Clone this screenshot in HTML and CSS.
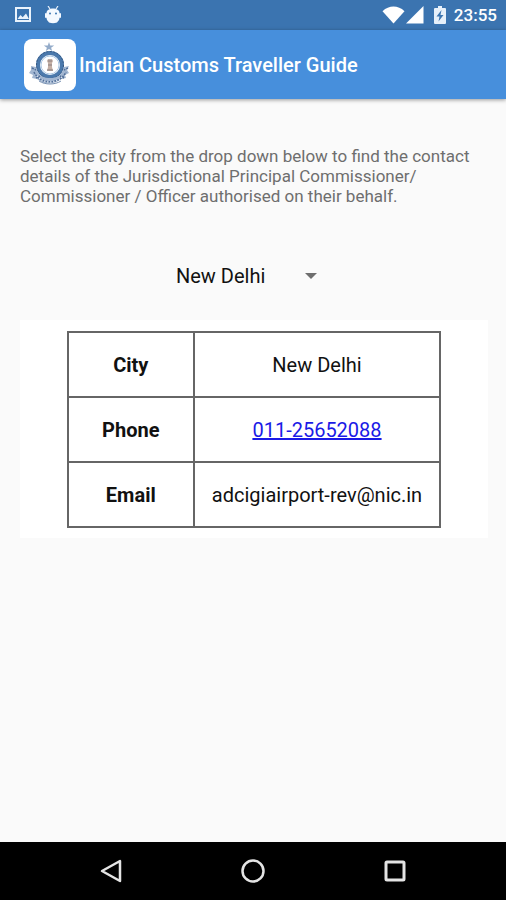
FILE: index.html
```html
<!DOCTYPE html>
<html lang="en">
<head>
<meta charset="utf-8">
<meta name="viewport" content="width=device-width, initial-scale=1">
<title>Indian Customs Traveller Guide</title>
<link rel="stylesheet" href="styles.css">
</head>
<body>
<div class="status">
  <svg class="status-picture" width="18" height="18" viewBox="0 0 18 18" aria-hidden="true"><path fill="#eaf3fc" fill-rule="evenodd" d="M1 1h16v15H1zM3 3v11h12V3z"/><path fill="#eaf3fc" d="M3.500 13l3-4 2.200 2.300L12 7.500l3 5.500z"/></svg>
  <svg class="status-droid" width="18" height="18" viewBox="0 0 18 18" aria-hidden="true"><path stroke="#eaf3fc" stroke-width="1.200" d="M4 0l2 3M14 0l-2 3"/><path fill="#f4f9ff" d="M2.500 7c0-6 13-6 13 0v5q0 2.500-2.500 4.500-4 1.500-8 0-2.500-2-2.500-4.500z"/><rect x="1" y="7" width="2" height="5" rx="1" fill="#f4f9ff"/><rect x="15" y="7" width="2" height="5" rx="1" fill="#f4f9ff"/><circle cx="6" cy="7.500" r="1" fill="#3c76b2"/><circle cx="12" cy="7.500" r="1" fill="#3c76b2"/></svg>
  <span class="spacer"></span>
  <svg width="23" height="18" viewBox="0 0 23 18" aria-hidden="true"><path fill="#fff" d="M.5 5.200C7-1 16-1 22.500 5.200L11.500 17.500z"/></svg>
  <svg class="status-signal" width="18" height="18" viewBox="0 0 18 18" aria-hidden="true"><path fill="#fff" d="M17.500 0v17.500H0z"/></svg>
  <svg class="status-battery" width="12" height="18" viewBox="0 0 12 18" aria-hidden="true"><path fill="#e6f0fa" d="M4 0h4v2h3q1 0 1 1v14q0 1-1 1H1q-1 0-1-1V3q0-1 1-1h3z"/><path fill="#3c76b2" d="M7.500 4L2.500 10.500h3L4.500 15.500 9.500 9h-3z"/></svg>
  <time class="clock">23:55</time>
</div>
<header class="appbar">
  <svg class="logo" width="52" height="52" viewBox="0 0 52 52" role="img" aria-label="Indian Customs emblem">
    <rect width="52" height="52" rx="8" fill="#fff"/>
    <path d="M25 3l1.200 3.400 4 .1-3.100 2.200 1.100 3.300-3.200-2-3.200 2 1.100-3.300-3.100-2.200 4-.1z" fill="#93abc9"/>
    <circle cx="26" cy="26" r="12" fill="#fff" stroke="#4b79ac" stroke-width="4"/>
    <circle cx="26" cy="26" r="13.500" fill="none" stroke="#34567f" stroke-width="1" stroke-dasharray="2 1.500"/>
    <path d="M7 27l5 1c2 9 8 11 14 11s12-2 14-11l5-1-2 4 2 3-4 2 1 3-5 1c-7 6-17 6-24 0l-5-1 1-3-4-2 2-3z" fill="#a2b6d1"/>
    <path d="M10 33c6 13 26 13 32 0M8 29l4 2M44 29l-4 2M12 39l4-2M40 39l-4-2" fill="none" stroke="#526f99" stroke-width="1.500" stroke-dasharray="2 1"/>
    <path d="M13 37c7 8 19 8 26 0" fill="none" stroke="#e3ebf4" stroke-width="1.500" stroke-dasharray="1 2"/>
    <path d="M15 42c6 4 16 4 22 0" fill="none" stroke="#7891b2"/>
    <circle cx="26" cy="26" r="9" fill="none" stroke="#abc8e5"/>
    <path d="M24 20h4l1 2-1 2v4l1 4h-6l1-4v-4l-1-2z" fill="#c4b0a5"/>
    <path d="M24 22h4M24 26h4M23 31h6" stroke="#8b7f80" stroke-width="1"/>
  </svg>
  <h1 class="title">Indian Customs Traveller Guide</h1>
</header>
<main class="content">
  <p class="intro">Select the city from the drop down below to find the contact details of the Jurisdictional Principal Commissioner/ Commissioner / Officer authorised on their behalf.</p>
  <div class="picker">
    <select class="city-select" aria-label="City"><option>New Delhi</option></select>
    <svg class="caret" width="12" height="6" viewBox="0 0 12 6" aria-hidden="true"><path fill="#6e6e6e" d="M0 0h12L6 6z"/></svg>
  </div>
  <section class="card">
    <table class="contact">
      <tbody>
        <tr><th scope="row">City</th><td>New Delhi</td></tr>
        <tr><th scope="row">Phone</th><td><a href="tel:011-25652088">011-25652088</a></td></tr>
        <tr><th scope="row">Email</th><td>adcigiairport-rev@nic.in</td></tr>
      </tbody>
    </table>
  </section>
</main>
<nav class="navbar" aria-label="System">
  <button class="nav-button" type="button" aria-label="Back"><svg width="24" height="26" viewBox="0 0 24 26"><path d="M21 3v20L3 13z" fill="none" stroke="#e4e4e4" stroke-width="2.500" stroke-linejoin="round"/></svg></button>
  <button class="nav-button" type="button" aria-label="Home"><svg width="26" height="26" viewBox="0 0 26 26"><circle cx="13" cy="13" r="10.500" fill="none" stroke="#e4e4e4" stroke-width="2.500"/></svg></button>
  <button class="nav-button" type="button" aria-label="Overview"><svg width="24" height="24" viewBox="0 0 24 24"><rect x="3" y="3" width="18" height="18" rx="1" fill="none" stroke="#e4e4e4" stroke-width="3"/></svg></button>
</nav>
</body>
</html>
```
FILE: styles.css
```css
* { box-sizing: border-box; }

body {
  margin: 0;
  min-height: 100vh;
  display: flex;
  flex-direction: column;
  background: #fafafa;
  color: #111;
  font-family: Roboto, "Liberation Sans", sans-serif;
}

svg { display: block; flex: none; }

.status {
  display: flex;
  align-items: center;
  height: 30px;
  padding: 0 9px 0 14px;
  background: #3b74b0;
  color: #fff;
}

.status-droid { margin-left: 12px; }
.spacer { flex: 1; }
.status-signal { margin-left: 1px; }
.status-battery { margin: 0 8px 0 10px; }
.clock { font-size: 17px; font-weight: 500; line-height: 30px; }

.appbar {
  display: flex;
  align-items: center;
  gap: 3px;
  height: 69px;
  padding: 0 24px;
  background: #478fdc;
  color: #fff;
  box-shadow: 0 1px 4px rgba(0, 0, 0, 0.4);
}

.title { margin: 0; font-size: 20px; font-weight: 500; line-height: 24px; }

.content { flex: 1; padding: 47px 18px 24px 20px; }

.intro { margin: 0; color: #6e6e6e; font-size: 17px; line-height: 20px; }

.picker {
  position: relative;
  width: 156px;
  margin: 54px auto 28px;
}

.city-select {
  display: block;
  width: 100%;
  height: 32px;
  padding: 0;
  border: 0;
  appearance: none;
  background: transparent;
  color: #111;
  font-family: inherit;
  font-size: 20px;
}

.caret { position: absolute; right: 15px; top: 13px; pointer-events: none; }

.card { padding: 11px 0 10px; background: #fff; }

.contact {
  width: 80%;
  margin: 0 auto;
  border-collapse: collapse;
  font-size: 20px;
  line-height: 24px;
  text-align: center;
}

.contact th,
.contact td { height: 65px; padding: 0 16px; border: 2px solid #666; }
.contact th { width: 126px; font-weight: 700; }
.contact td { white-space: nowrap; }
.contact a { color: #1a1ae6; }

.navbar {
  display: flex;
  justify-content: center;
  height: 58px;
  background: #000;
}

.nav-button {
  display: flex;
  align-items: center;
  justify-content: center;
  width: 28%;
  padding: 0;
  border: 0;
  background: transparent;
}
```
